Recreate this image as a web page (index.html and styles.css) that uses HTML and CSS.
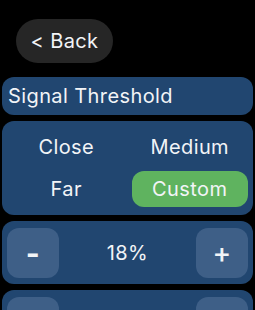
FILE: index.html
```html
<!DOCTYPE html>
<html lang="en">
    <head>
        <meta charset="UTF-8">
        <meta name="viewport" content="width=device-width, initial-scale=1.0">
        <title>Signal Threshold</title>
        <link rel="stylesheet" href="styles.css">
    </head>

    <body>

        <!-- Кнопка назад -->

        <div class="back-row">
            <div class="back-btn">&lt; Back</div>
        </div>

        <!-- Заголовок -->

        <div class="title-bar">Signal Threshold</div>

        <!-- Выбор режима -->

        <div class="panel options">
            <div class="option">Close</div>
            <div class="option">Medium</div>
            <div class="option">Far</div>
            <div class="option selected">Custom</div>
        </div>

        <!-- Степпер -->

        <div class="panel stepper">
            <div class="step-btn minus">-</div>
            <div class="value">18%</div>
            <div class="step-btn">+</div>
        </div>

        <div class="panel stepper">
            <div class="step-btn"></div>
            <div class="value"></div>
            <div class="step-btn"></div>
        </div>

    </body>

</html>
```

FILE: styles.css
```css
body {
    margin: 0;
    padding: 19px 2px 0 2px;
    background: #000;
    color: #f2f4f7;
    font-family: 'Inter', 'Roboto', sans-serif;
    letter-spacing: 0.4px;
    height: 310px;
    box-sizing: border-box;
    overflow: hidden;
}

/* Кнопка назад */

.back-row {
    display: flex;
    padding-left: 14px;
    margin-bottom: 14px;
}

.back-btn {
    display: flex;
    align-items: center;
    justify-content: center;
    width: 97px;
    height: 44px;
    border-radius: 22px;
    background: #262626;
    font-size: 20px;
}

/* Заголовок */

.title-bar {
    display: flex;
    align-items: center;
    height: 38px;
    padding-left: 6px;
    border-radius: 12px;
    background: #214670;
    font-size: 20px;
    margin-bottom: 6px;
}

/* Панели */

.panel {
    background: #214670;
    border-radius: 12px;
    margin-bottom: 6px;
}

.options {
    display: grid;
    grid-template-columns: 1fr 1fr;
    grid-auto-rows: 36px;
    gap: 6px 7px;
    padding: 8px 5px 8px 6px;
}

.option {
    display: flex;
    align-items: center;
    justify-content: center;
    border-radius: 12px;
    font-size: 20px;
}

.option.selected {
    background: #5fb35f;
}

/* Степпер */

.stepper {
    display: flex;
    align-items: center;
    justify-content: space-between;
    height: 63px;
    padding: 0 5px;
    box-sizing: border-box;
}

.step-btn {
    display: flex;
    align-items: center;
    justify-content: center;
    width: 52px;
    height: 50px;
    border-radius: 12px;
    background: #3e5f87;
    font-size: 28px;
    font-weight: 500;
}

.step-btn.minus {
    font-size: 30px;
    font-weight: 700;
}

.value {
    font-size: 20px;
}
```
